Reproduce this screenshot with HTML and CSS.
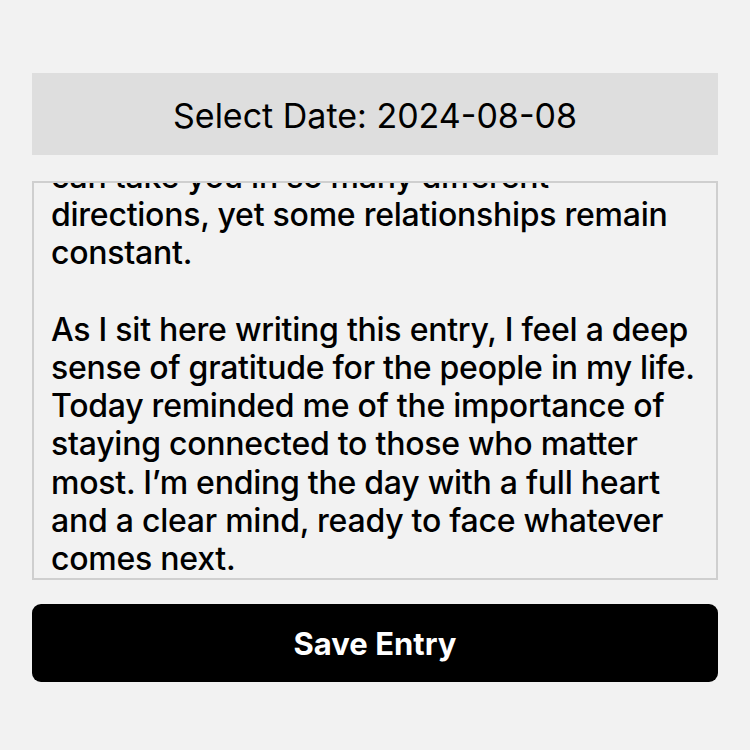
FILE: index.html
```html
<!DOCTYPE html>
<html>
<head>
<meta charset="utf-8">
<link rel="stylesheet" href="styles.css">
</head>
<body>
<main class="screen">
  <div class="date-picker">Select Date: 2024-08-08</div>
  <div class="entry-box">
    <div class="entry-text">
      <span class="line">can take you in so many different</span>
      <span class="line">directions, yet some relationships remain</span>
      <span class="line">constant.</span>
      <span class="line">&nbsp;</span>
      <span class="line">As I sit here writing this entry, I feel a deep</span>
      <span class="line">sense of gratitude for the people in my life.</span>
      <span class="line">Today reminded me of the importance of</span>
      <span class="line">staying connected to those who matter</span>
      <span class="line">most. I’m ending the day with a full heart</span>
      <span class="line">and a clear mind, ready to face whatever</span>
      <span class="line">comes next.</span>
    </div>
  </div>
  <button class="save-btn">Save Entry</button>
</main>
</body>
</html>
```
FILE: styles.css
```css
html, body {
  margin: 0;
  padding: 0;
  background: #f2f2f2;
}
body {
  font-family: Inter, "Noto Sans", sans-serif;
  color: #000;
}
.screen {
  display: flex;
  flex-direction: column;
  padding: 73px 32px 0 32px;
}
.date-picker {
  height: 82px;
  background: #dedede;
  display: flex;
  align-items: center;
  justify-content: center;
  font-size: 34px;
  font-weight: 400;
  padding-top: 2px;
  box-sizing: border-box;
}
.entry-box {
  margin-top: 26px;
  border: 2px solid #cfcfcf;
  overflow: hidden;
  box-sizing: border-box;
  height: 399px;
}
.entry-text {
  margin-top: -25px;
  padding: 0 17px;
  font-size: 32px;
  font-weight: 500;
  line-height: 38.2px;
  letter-spacing: -0.25px;
}
.line {
  display: block;
  white-space: nowrap;
}
.save-btn {
  margin-top: 24px;
  height: 78px;
  border: none;
  border-radius: 9px;
  background: #000;
  color: #fff;
  font-family: Inter, "Noto Sans", sans-serif;
  font-size: 31px;
  font-weight: 700;
}
```
